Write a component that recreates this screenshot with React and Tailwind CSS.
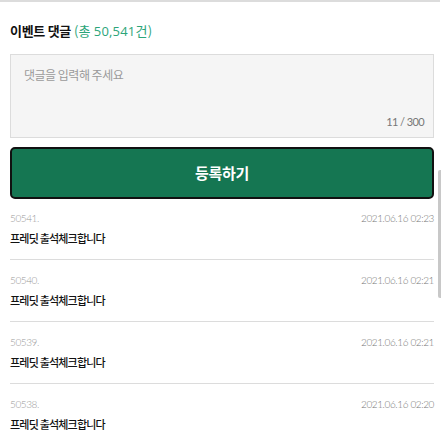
import React from "react";

const rows = [
  { n: "50541.", d: "2021.06.16 02:23" },
  { n: "50540.", d: "2021.06.16 02:21" },
  { n: "50539.", d: "2021.06.16 02:21" },
  { n: "50538.", d: "2021.06.16 02:20" },
];

const kr = { fontFamily: '"Noto Sans CJK KR", "Noto Sans", sans-serif' };
const num = { fontFamily: 'Lato, "Noto Sans CJK KR", sans-serif' };
const num2 = { fontFamily: '"Open Sans", "Noto Sans CJK KR", sans-serif' };

export default function App() {
  return (
    <div className="relative w-[441px] h-[435px] overflow-hidden bg-white" style={kr}>
      <div className="h-[2px] bg-[#dcdcdc] w-[440px]" />
      <div className="pl-[10px] pr-[7px]">
        <div className="pt-[19px] h-[52px] text-[13px] leading-[20px]">
          <span className="font-bold text-[#111] tracking-[-0.3px]">이벤트 댓글</span>{" "}
          <span className="text-[#2ca57a] tracking-[0.2px]">(총 <span style={num2}>50,541</span>건)</span>
        </div>
        <div className="h-[84px] border border-[#dcdcdc] bg-[#f5f5f5] flex flex-col justify-between pl-[13px] pr-[9px] pt-[11px] pb-[7px]">
          <div className="text-[12px] leading-[18px] text-[#9a9a9a] tracking-[-0.5px]">댓글을 입력해 주세요</div>
          <div className="text-right text-[11px] leading-[16px] text-[#777] tracking-[-0.6px]" style={num}>11 / 300</div>
        </div>
        <div className="mt-[9px] h-[52px] rounded-[5px] border-2 border-[#111] bg-[#157652] flex items-center justify-center">
          <span className="text-white font-bold text-[15px] tracking-[-0.3px]">등록하기</span>
        </div>
        <div className="-mt-px">
          {rows.map((r, i) => (
            <div key={i} className={"h-[62px] pt-[13px] " + (i < rows.length - 1 ? "border-b border-[#dcdcdc]" : "")}>
              <div className="flex justify-between text-[10px] leading-[14px] font-light text-[#999] tracking-[-0.4px]" style={num}>
                <span>{r.n}</span>
                <span className="text-[#777]">{r.d}</span>
              </div>
              <div className="mt-[5px] text-[11px] leading-[16px] font-medium text-[#111] tracking-[-0.8px]">프레딧 출석체크합니다</div>
            </div>
          ))}
        </div>
      </div>
      <div className="absolute right-0 top-[170px] w-[3px] h-[128px] rounded-l-[2px] bg-[#c8c8c8]" />
    </div>
  );
}
